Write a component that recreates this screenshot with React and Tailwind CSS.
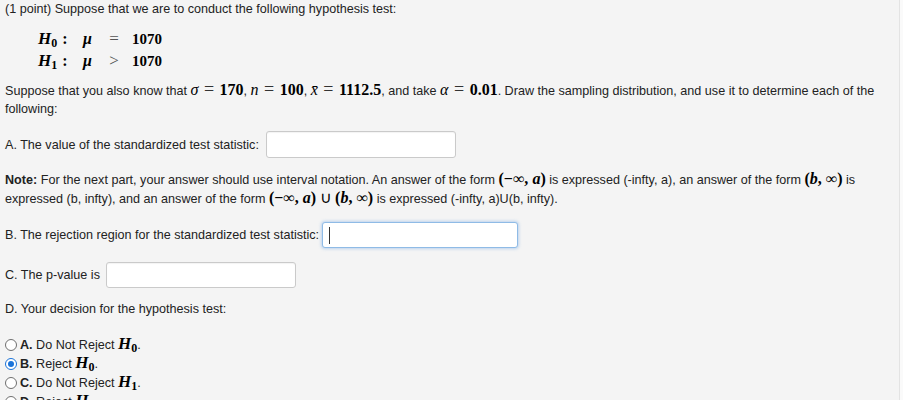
import React from 'react';

const serif = "[font-family:'Liberation_Serif',serif]";

const M = ({ children, className = '' }) => (
  <span className={`${serif} text-[16px] text-black ${className}`}>{children}</span>
);

const Eq = ({ children = '=' }) => (
  <span className={`${serif} text-[18px] leading-[14px] text-[#333] mx-[2px]`}>{children}</span>
);

const H = ({ sub }) => (
  <span className={`${serif} text-black`}>
    <span className="italic font-bold text-[17px]">H</span>
    <span className="font-bold text-[12px] relative top-[3px]">{sub}</span>
  </span>
);

const Field = ({ w, h = 'h-[26px]', focused }) => (
  <div
    className={`${w} ${h} bg-white rounded-[3px] border ${
      focused
        ? 'border-[#8fbbe6] shadow-[0_0_3px_1px_rgba(120,170,230,0.45)]'
        : 'border-[#cacaca] shadow-[inset_0_1px_1px_rgba(0,0,0,0.05)]'
    } flex items-center pl-[6px]`}
  >
    {focused && <span className="w-px h-[17px] bg-[#333]" />}
  </div>
);

const Radio = ({ checked }) =>
  checked ? (
    <span className="w-[12px] h-[12px] rounded-full border-[1.5px] border-[#1a73d9] bg-white flex items-center justify-center shrink-0">
      <span className="w-[6px] h-[6px] rounded-full bg-[#1a73d9]" />
    </span>
  ) : (
    <span className="w-[12px] h-[12px] rounded-full border border-[#6f6f6f] bg-white shrink-0" />
  );

const options = [
  { key: 'A', text: 'Do Not Reject', h: '0' },
  { key: 'B', text: 'Reject', h: '0', checked: true },
  { key: 'C', text: 'Do Not Reject', h: '1' },
  { key: 'D', text: 'Reject', h: '1' },
];

export default function App() {
  return (
    <div className="w-[903px] h-[400px] overflow-hidden flex bg-white">
      <div className="w-[900px] shrink-0 bg-[#f4f4f4] border-r border-[#e3e3e3] pl-[5px] text-[12.6px] leading-[18px] text-[#222] [font-family:'Liberation_Sans',Arial,sans-serif]">
        <p>(1 point) Suppose that we are to conduct the following hypothesis test:</p>

        <div className={`mt-[10px] ml-[33px] grid grid-cols-[45px_21px_20px_auto] ${serif} text-black`}>
          {[
            ['0', '='],
            ['1', '>'],
          ].map(([s, op]) => (
            <React.Fragment key={s}>
              <div className="h-[22px] flex items-center">
                <H sub={s} />
                <span className="ml-[5px] font-bold text-[16px]">:</span>
              </div>
              <div className="h-[22px] flex items-center italic font-bold text-[16px]">μ</div>
              <div className="h-[22px] flex items-center justify-center text-[17px] text-[#555]">{op}</div>
              <div className="h-[22px] flex items-center pl-[8px] font-bold text-[15px]">1070</div>
            </React.Fragment>
          ))}
        </div>

        <p className="mt-[9px]">
          Suppose that you also know that <M className="italic">σ</M> <Eq /> <M className="font-bold">170</M>,{' '}
          <M className="italic">n</M> <Eq /> <M className="font-bold">100</M>,{' '}
          <M className="italic">x̄</M> <Eq /> <M className="font-bold">1112.5</M>, and take{' '}
          <M className="italic">α</M> <Eq /> <M className="font-bold">0.01</M>. Draw the sampling distribution, and use it to determine each of the
          <br />
          following:
        </p>

        <div className="mt-[13px] flex items-center gap-[7px]">
          <span>A. The value of the standardized test statistic:</span>
          <Field w="w-[190px]" h="h-[27px]" />
        </div>

        <p className="mt-[12px]">
          <b>Note:</b> For the next part, your answer should use interval notation. An answer of the form{' '}
          <M className="font-bold">(−∞, <i>a</i>)</M> is expressed (-infty, a), an answer of the form{' '}
          <M className="font-bold">(<i>b</i>, ∞)</M> is
          <br />
          expressed (b, infty), and an answer of the form <M className="font-bold">(−∞, <i>a</i>)</M>{' '}
          <M>∪</M> <M className="font-bold">(<i>b</i>, ∞)</M> is expressed (-infty, a)U(b, infty).
        </p>

        <div className="mt-[14px] flex items-center gap-[3px]">
          <span>B. The rejection region for the standardized test statistic:</span>
          <Field w="w-[196px]" focused />
        </div>

        <div className="mt-[14px] flex items-center gap-[6px]">
          <span>C. The p-value is</span>
          <Field w="w-[190px]" />
        </div>

        <p className="mt-[12px]">D. Your decision for the hypothesis test:</p>

        <div className="mt-[17px] flex flex-col">
          {options.map((o) => (
            <div key={o.key} className="h-[19px] flex items-center gap-[3px]">
              <Radio checked={o.checked} />
              <span className="text-[12.6px]">
                <b>{o.key}.</b> {o.text} <H sub={o.h} />.
              </span>
            </div>
          ))}
        </div>
      </div>
      <div className="flex-1 bg-[#fafafa]" />
    </div>
  );
}
